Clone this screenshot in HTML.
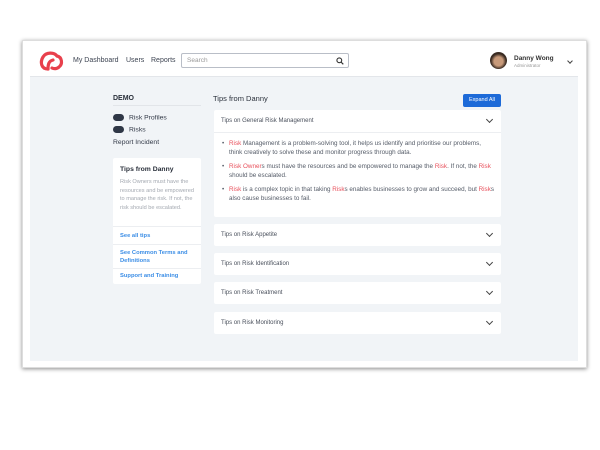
<!DOCTYPE html><html><head><style>
*{margin:0;padding:0;box-sizing:border-box}
body{width:600px;height:450px;background:#fff;font-family:"Liberation Sans",sans-serif;position:relative;overflow:hidden;color:#333a48}
.a{position:absolute}
.win{left:22px;top:40px;width:565px;height:328px;background:#fff;box-shadow:0 1px 4px rgba(0,0,0,.45);border:1px solid #ddd}
.gray{left:30px;top:77px;width:548px;height:284px;background:#f1f4f7}
.nav{font-size:7px;color:#3d4452;top:57px}
.card{background:#fff;border-radius:2px}
.acc{left:214px;width:287px;height:22px;background:#fff;font-size:6px;color:#4a505c;line-height:22px;padding-left:7px;border-radius:2px}
.chev{position:absolute;right:9px;top:7px;width:5px;height:5px;border-right:1.2px solid #444;border-bottom:1.2px solid #444;transform:rotate(45deg)}
.r{color:#e8505b}
.bl{font-size:6.3px;line-height:9px;color:#555c68}
.lk{color:#3c8ee6;font-size:5.8px;font-weight:bold}
.badge{display:inline-block;width:11px;height:7px;border-radius:3.5px;background:#2f3746;vertical-align:middle;margin-right:5px}
</style></head><body>
<div class="a win"></div>
<div class="a gray"></div>
<svg class="a" style="left:38px;top:50px" width="26" height="22" viewBox="0 0 26 22"><path d="M10 19 C3 19 2 12 5 7 C8 2 16 2 19 6 C24 7 25 14 21 17 C19 19 16 19 14 18" fill="none" stroke="#e8404c" stroke-width="3.2" stroke-linecap="round"/><path d="M10 19 C10 14 11 11 15 10" fill="none" stroke="#e8404c" stroke-width="3.2" stroke-linecap="round"/></svg>
<div class="a nav" style="left:73px">My Dashboard</div>
<div class="a nav" style="left:126px">Users</div>
<div class="a nav" style="left:151px">Reports</div>
<div class="a" style="left:181px;top:53px;width:168px;height:15px;border:1px solid #b9bec7;border-radius:2px;font-size:6.5px;color:#999;padding:3px 5px">Search</div>
<svg class="a" style="left:336px;top:57px" width="8" height="8" viewBox="0 0 8 8"><circle cx="3.3" cy="3.3" r="2.4" fill="none" stroke="#333" stroke-width="1.1"/><path d="M5 5 L7.3 7.3" stroke="#333" stroke-width="1.2"/></svg>
<div class="a" style="left:490px;top:52px;width:17px;height:17px;border-radius:50%;background:radial-gradient(circle at 50% 55%,#c89a7a 35%,#3a2b22 60%)"></div>
<div class="a" style="left:514px;top:55px;font-size:6.5px;font-weight:bold;color:#333">Danny Wong</div>
<div class="a" style="left:514px;top:63px;font-size:4.5px;color:#999">Administrator</div>
<div class="a" style="left:568px;top:59px;width:4px;height:4px;border-right:1px solid #444;border-bottom:1px solid #444;transform:rotate(45deg)"></div>
<div class="a" style="left:30px;top:76px;width:548px;height:1px;background:#e3e6ea"></div>

<div class="a" style="left:113px;top:95px;font-size:7px;font-weight:bold;color:#2a303b">DEMO</div>
<div class="a" style="left:113px;top:105px;width:88px;height:1px;background:#e2e5e9"></div>
<div class="a" style="left:113px;top:114px;font-size:6.8px"><span class="badge"></span>Risk Profiles</div>
<div class="a" style="left:113px;top:126px;font-size:6.8px"><span class="badge"></span>Risks</div>
<div class="a" style="left:113px;top:139px;font-size:6.8px">Report Incident</div>
<div class="a card" style="left:113px;top:158px;width:88px;height:126px"></div>
<div class="a" style="left:120px;top:166px;font-size:6.8px;font-weight:bold;color:#2a303b">Tips from Danny</div>
<div class="a" style="left:120px;top:178px;width:78px;font-size:5.6px;line-height:8.7px;color:#a4a9b1">Risk Owners must have the resources and be empowered to manage the risk. If not, the risk should be escalated.</div>
<div class="a" style="left:113px;top:226px;width:88px;height:1px;background:#eceef1"></div>
<div class="a lk" style="left:120px;top:233px">See all tips</div>
<div class="a" style="left:113px;top:244px;width:88px;height:1px;background:#eceef1"></div>
<div class="a lk" style="left:120px;top:249px;line-height:8px;width:78px">See Common Terms and Definitions</div>
<div class="a" style="left:113px;top:268px;width:88px;height:1px;background:#eceef1"></div>
<div class="a lk" style="left:120px;top:273px">Support and Training</div>

<div class="a" style="left:213px;top:94px;font-size:7.5px;color:#2a303b">Tips from Danny</div>
<div class="a" style="left:463px;top:94px;width:38px;height:13px;background:#1d6ad8;border-radius:2px;color:#fff;font-size:5.5px;text-align:center;line-height:13px">Expand All</div>
<div class="a card" style="left:214px;top:110px;width:287px;height:107px"></div>
<div class="a" style="left:221px;top:110px;font-size:6px;line-height:22px;color:#4a505c">Tips on General Risk Management</div>
<div class="a" style="left:214px;top:110px;width:287px;height:22px"><div class="chev"></div></div>
<div class="a" style="left:214px;top:132px;width:287px;height:1px;background:#eceef1"></div>
<div class="a bl" style="left:222px;top:139px;width:272px">
<div style="padding-left:7px;position:relative;margin-bottom:5px"><span style="position:absolute;left:0">•</span><span class="r">Risk</span> Management is a problem-solving tool, it helps us identify and prioritise our problems, think creatively to solve these and monitor progress through data.</div>
<div style="padding-left:7px;position:relative;margin-bottom:5px"><span style="position:absolute;left:0">•</span><span class="r">Risk Owner</span>s must have the resources and be empowered to manage the <span class="r">Risk</span>. If not, the <span class="r">Risk</span> should be escalated.</div>
<div style="padding-left:7px;position:relative"><span style="position:absolute;left:0">•</span><span class="r">Risk</span> is a complex topic in that taking <span class="r">Risk</span>s enables businesses to grow and succeed, but <span class="r">Risk</span>s also cause businesses to fail.</div>
</div>
<div class="a acc" style="top:224px">Tips on Risk Appetite<div class="chev"></div></div>
<div class="a acc" style="top:253px">Tips on Risk Identification<div class="chev"></div></div>
<div class="a acc" style="top:282px">Tips on Risk Treatment<div class="chev"></div></div>
<div class="a acc" style="top:312px">Tips on Risk Monitoring<div class="chev"></div></div>
</body></html>
